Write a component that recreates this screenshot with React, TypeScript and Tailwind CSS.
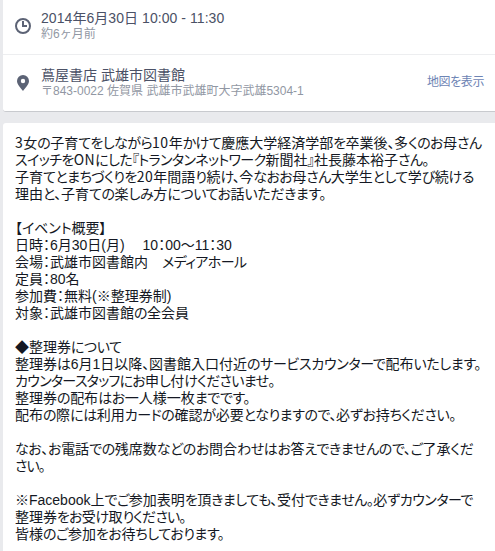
import React from "react";

// [text, letter spacing of the kana in px]
const lines: [string, number][] = [
  ["３女の子育てをしながら１０年かけて慶應大学経済学部を卒業後、多くのお母さん", -0.52],
  ["スイッチをＯＮにした『トランタンネットワーク新聞社』社長藤本裕子さん。", -0.6],
  ["子育てとまちづくりを２０年間語り続け、今なおお母さん大学生として学び続ける", -0.55],
  ["理由と、子育ての楽しみ方についてお話いただきます。", -0.4],
  ["", 0],
  ["【イベント概要】", -0.1],
  ["日時：6月30日(月)　 10：00～11：30", 0],
  ["会場：武雄市図書館内　メディアホール", -0.6],
  ["定員：80名", 0],
  ["参加費：無料(※整理券制)", 0],
  ["対象：武雄市図書館の全会員", -0.4],
  ["", 0],
  ["◆整理券について", -0.45],
  ["整理券は6月1日以降、図書館入口付近のサービスカウンターで配布いたします。", -0.32],
  ["カウンタースタッフにお申し付けくださいませ。", -0.7],
  ["整理券の配布はお一人様一枚までです。", -0.38],
  ["配布の際には利用カードの確認が必要となりますので、必ずお持ちください。", -0.42],
  ["", 0],
  ["なお、お電話での残席数などのお問合わせはお答えできませんので、ご了承くだ", -0.37],
  ["さい。", -1],
  ["", 0],
  ["※Facebook上でご参加表明を頂きましても、受付できません。必ずカウンターで", -0.48],
  ["整理券をお受け取りください。", -0.85],
  ["皆様のご参加をお待ちしております。", -0.45],
];

const Line = ({ text, kana }: { text: string; kana: number }) => (
  <p className="h-[17px] whitespace-pre">
    {text.split(/([\u3001-\u300f\u3041-\u30ff]+|[０-９Ａ-Ｚ]+)/).map((part, i) => {
      if (/^[０-９Ａ-Ｚ]/.test(part)) {
        return (
          <span key={i} className="font-['Noto_Sans_CJK_JP',sans-serif] leading-[8px] tracking-[0.5px]">
            {part.normalize("NFKC")}
          </span>
        );
      }
      return (
        <span key={i} style={i % 2 ? { letterSpacing: kana } : undefined}>
          {part}
        </span>
      );
    })}
  </p>
);

const App = () => {
  return (
    <main
      lang="ja"
      className="h-[551px] w-[495px] overflow-hidden bg-[#e9eaed] pl-[3px] font-['Liberation_Sans','Noto_Sans_CJK_JP',sans-serif]"
    >
      {/* Date and place */}
      <section className="h-[112px] rounded-bl-[3px] border-b border-[#c8cace] bg-white">
        <div className="flex h-[54px] items-start">
          <svg className="ml-3 mt-[18px] size-4" viewBox="0 0 16 16" fill="none" stroke="#5c6375" strokeWidth="2">
            <circle cx="8" cy="8" r="7" />
            <path d="M8 3v5h4" />
          </svg>
          <div className="ml-[10px] mt-[9px] whitespace-pre">
            <p className="text-[14px] leading-[18px] tracking-[0.06px] text-[#4b5166]">2014年6月30日 10:00 - 11:30</p>
            <p className="text-[12px] leading-[14px] text-[#9197a3]">約6ヶ月前</p>
          </div>
        </div>
        <div className="flex h-[56px] items-start border-t border-[#edeef0]">
          <svg className="ml-[14px] mt-5 h-4 w-3" viewBox="0 0 12 16" fill="#5c6375">
            <path fillRule="evenodd" d="M6 0a6 6 0 0 1 6 6c0 3.500-3.500 6.500-6 10C3.500 12.500 0 9.500 0 6a6 6 0 0 1 6-6Zm0 3.800a2.200 2.200 0 1 0 0 4.400 2.200 2.200 0 0 0 0-4.400Z" />
          </svg>
          <div className="ml-3 mt-[11px] whitespace-pre">
            <p className="text-[14px] leading-[18px] text-[#4b5166]">蔦屋書店 武雄市図書館</p>
            <p className="text-[12px] leading-[14px] text-[#9197a3]">〒843-0022 佐賀県 武雄市武雄町大字武雄5304-1</p>
          </div>
          <a className="ml-auto mr-[11px] mt-[18px] text-[12px] leading-[18px] tracking-[-0.4px] text-[#6d84b4] [font-feature-settings:'palt']">地図を表示</a>
        </div>
      </section>

      {/* Event description */}
      <section className="mt-[11px] h-[440px] rounded-tl-[3px] bg-white pl-3 pt-3 text-[14px] leading-[17px] text-[#141823] [font-feature-settings:'palt']">
        {lines.map(([text, kana], i) => (
          <Line key={i} text={text} kana={kana} />
        ))}
      </section>
    </main>
  );
};

export default App;
